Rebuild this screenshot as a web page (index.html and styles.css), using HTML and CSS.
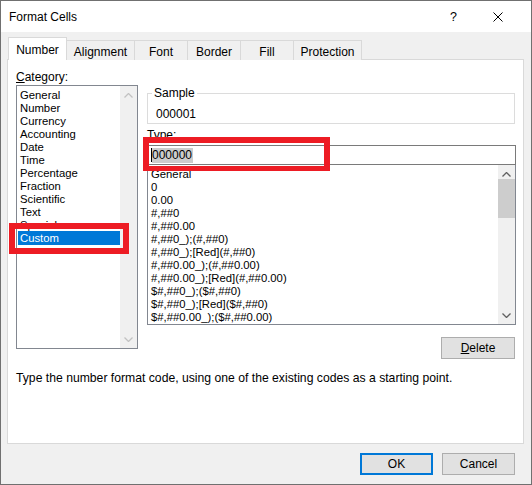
FILE: index.html
```html
<!DOCTYPE html>
<html>
<head>
<meta charset="utf-8">
<link rel="stylesheet" href="styles.css">
</head>
<body>
<div class="window">
  <div class="titlebar">
    <span class="title">Format Cells</span>
    <span class="help">?</span>
    <svg class="close" width="10" height="10" viewBox="0 0 10 10"><path d="M0.5 0.5 L9.5 9.5 M9.5 0.5 L0.5 9.5" stroke="#000" stroke-width="1" fill="none"/></svg>
  </div>
  <div class="body">
    <div class="tabs">
      <div class="tab active w58">Number</div>
      <div class="tab w68">Alignment</div>
      <div class="tab w53">Font</div>
      <div class="tab w53">Border</div>
      <div class="tab w53">Fill</div>
      <div class="tab w68">Protection</div>
    </div>
    <div class="panel">
      <div class="cols">
        <div class="left">
          <div class="label"><u>C</u>ategory:</div>
          <div class="catlist">
            <div class="items">
              <div class="item">General</div>
              <div class="item">Number</div>
              <div class="item">Currency</div>
              <div class="item">Accounting</div>
              <div class="item">Date</div>
              <div class="item">Time</div>
              <div class="item">Percentage</div>
              <div class="item">Fraction</div>
              <div class="item">Scientific</div>
              <div class="item">Text</div>
              <div class="item">Special</div>
              <div class="item sel">Custom</div>
            </div>
            <div class="scroll disabled">
              <svg class="arrow" width="9" height="5" viewBox="0 0 9 5"><polyline points="0.5,4.5 4.5,0.5 8.5,4.5" fill="none" stroke="#c2c2c2" stroke-width="1.3"/></svg>
              <div class="track"></div>
              <svg class="arrow" width="9" height="5" viewBox="0 0 9 5"><polyline points="0.5,0.5 4.5,4.5 8.5,0.5" fill="none" stroke="#c2c2c2" stroke-width="1.3"/></svg>
            </div>
          </div>
        </div>
        <div class="right">
          <fieldset class="sample">
            <legend>Sample</legend>
            <div class="sample-val">000001</div>
          </fieldset>
          <div class="label type-label">Type:</div>
          <div class="input"><span class="cursor"></span><span class="selected">000000</span></div>
          <div class="fmtlist">
            <div class="fmtitems">
              <div class="fitem">General</div>
              <div class="fitem">0</div>
              <div class="fitem">0.00</div>
              <div class="fitem">#,##0</div>
              <div class="fitem">#,##0.00</div>
              <div class="fitem">#,##0_);(#,##0)</div>
              <div class="fitem">#,##0_);[Red](#,##0)</div>
              <div class="fitem">#,##0.00_);(#,##0.00)</div>
              <div class="fitem">#,##0.00_);[Red](#,##0.00)</div>
              <div class="fitem">$#,##0_);($#,##0)</div>
              <div class="fitem">$#,##0_);[Red]($#,##0)</div>
              <div class="fitem">$#,##0.00_);($#,##0.00)</div>
            </div>
            <div class="scroll">
              <svg class="arrow" width="9" height="5" viewBox="0 0 9 5"><polyline points="0.5,4.5 4.5,0.5 8.5,4.5" fill="none" stroke="#606060" stroke-width="1.3"/></svg>
              <div class="track"><div class="thumb"></div></div>
              <svg class="arrow" width="9" height="5" viewBox="0 0 9 5"><polyline points="0.5,0.5 4.5,4.5 8.5,0.5" fill="none" stroke="#606060" stroke-width="1.3"/></svg>
            </div>
          </div>
          <button class="btn delete"><u>D</u>elete</button>
        </div>
      </div>
      <div class="desc">Type the number format code, using one of the existing codes as a starting point.</div>
    </div>
    <div class="buttons">
      <button class="btn ok">OK</button>
      <button class="btn cancel">Cancel</button>
    </div>
  </div>
  <div class="mark mark-custom"></div>
  <div class="mark mark-type"></div>
</div>
</body>
</html>
```

FILE: styles.css
```css
* { box-sizing: border-box; }
html, body { margin: 0; padding: 0; }
body {
  font-family: "Liberation Sans", Arial, sans-serif;
  font-size: 12px;
  color: #000;
  background: #fff;
}
.window {
  position: relative;
  width: 532px;
  height: 485px;
  border: 1px solid #707070;
  background: #f0f0f0;
  overflow: hidden;
}
.titlebar {
  height: 31px;
  background: #fff;
  display: flex;
  align-items: center;
  padding-left: 8px;
  padding-top: 1px;
}
.title { font-size: 12px; flex: 1; }
.help { font-size: 12.5px; margin-right: 36px; }
.close { margin-right: 28px; }
.body {
  padding: 6px 0 0 6px;
}
.tabs {
  display: flex;
  align-items: flex-end;
  height: 22px;
  padding-left: 1px;
  position: relative;
  z-index: 1;
  margin-bottom: -1px;
}
.tab {
  height: 20px;
  border: 1px solid #d9d9d9;
  border-bottom: none;
  background: #f0f0f0;
  text-align: center;
  line-height: 19px;
  padding-top: 2px;
  margin-right: -1px;
}
.tab.active {
  height: 23px;
  background: #fff;
  line-height: 20px;
  padding-top: 2px;
}
.w58 { width: 59px; }
.w68 { width: 69px; }
.w53 { width: 54px; }
.panel {
  width: 517px;
  height: 385px;
  background: #fff;
  border: 1px solid #d9d9d9;
  padding: 8px 6px 0 8px;
}
.cols {
  display: grid;
  grid-template-columns: 122px 369px;
  column-gap: 9px;
  align-items: start;
}
.left, .right { display: flex; flex-direction: column; }
.label { line-height: 16px; height: 16px; }
.left .label { margin-top: 1px; margin-bottom: 0; }
.catlist {
  height: 264px;
  border: 1px solid #828790;
  display: flex;
}
.items {
  flex: 1;
  padding: 3px 0 0 1px;
  font-size: 11.3px;
}
.item {
  height: 13px;
  line-height: 13px;
  padding-left: 2px;
  white-space: nowrap;
}
.item.sel {
  background: #0078d7;
  color: #fff;
  height: 14px;
  margin-top: -1px;
  line-height: 15px;
}
.scroll {
  width: 17px;
  background: #f0f0f0;
  display: flex;
  flex-direction: column;
  align-items: center;
}
.scroll .arrow { margin: 7px 0 6px; flex: none; }
.scroll .track { flex: 1; width: 100%; }
.thumb {
  width: 100%;
  height: 39px;
  background: #cdcdcd;
}
.fmtlist .scroll .arrow:first-child { margin: 7px 0 2px; }
.sample {
  margin: 17px 0 0 0;
  padding: 0;
  border: 1px solid #dcdcdc;
  width: 368px;
  height: 39px;
}
.sample legend {
  padding: 0 2px;
  margin-left: 4px;
  line-height: 16px;
}
.sample-val {
  padding: 5px 0 0 8px;
  line-height: 16px;
}
.type-label { margin-top: 3px; }
.input {
  margin-top: 2px;
  height: 20px;
  border: 1px solid #7a7a7a;
  display: flex;
  align-items: center;
  padding-left: 3px;
}
.cursor {
  width: 1px;
  height: 14px;
  background: #000;
}
.selected {
  background: #cccccc;
  line-height: 15px;
  padding-right: 1px;
}
.fmtlist {
  height: 160px;
  border: 1px solid #828790;
  border-top: none;
  display: flex;
}
.fmtitems {
  flex: 1;
  padding: 3px 0 0 3px;
  overflow: hidden;
  font-size: 11.3px;
}
.fitem {
  height: 13px;
  line-height: 13px;
  white-space: nowrap;
}
.btn {
  font-family: inherit;
  font-size: 12px;
  height: 22px;
  width: 73px;
  background: #e1e1e1;
  border: 1px solid #adadad;
  padding: 0;
  color: #000;
  line-height: 18px;
}
.delete {
  align-self: flex-end;
  width: 74px;
  margin-top: 12px;
  margin-right: 1px;
}
.desc {
  margin-top: 11px;
  line-height: 16px;
  font-size: 12.2px;
}
.buttons {
  display: flex;
  justify-content: flex-end;
  gap: 9px;
  padding-right: 16px;
  margin-top: 9px;
}
.ok { border: 2px solid #0078d7; }
.mark {
  position: absolute;
  border: 6px solid #ed1c24;
}
.mark-custom {
  left: 8px;
  top: 222px;
  width: 120px;
  height: 31px;
}
.mark-type {
  left: 142px;
  top: 136px;
  width: 187px;
  height: 34px;
  border-bottom-width: 5px;
}
```
